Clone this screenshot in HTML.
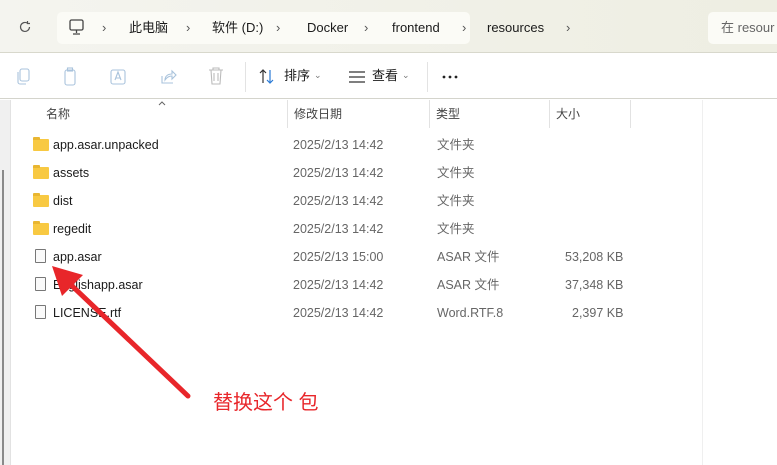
<!DOCTYPE html>
<html><head><meta charset="utf-8"><style>
*{margin:0;padding:0;box-sizing:border-box}
body{width:777px;height:465px;overflow:hidden;background:#fff;font-family:"Liberation Sans","Noto Sans CJK SC",sans-serif;position:relative;color:#1a1a1a;line-height:16px}
.top{position:absolute;left:0;top:0;width:777px;height:53px;background:linear-gradient(90deg,#f4f4ef,#eeeee2);border-bottom:1px solid #d8d8cc}
.bar{position:absolute;left:57px;top:12px;width:413px;height:32px;background:#fbfbf6;border-radius:5px}
.search{position:absolute;left:708px;top:12px;width:80px;height:32px;background:#fbfbf6;border-radius:5px;font-size:13px;color:#666;padding:8px 0 0 13px}
.t{position:absolute;font-size:13px;line-height:16px}
.tb{position:absolute;left:0;top:54px;width:777px;height:45px;background:#fff;border-bottom:1px solid #d4d4cc}
.left{position:absolute;left:0;top:100px;width:11px;height:365px;background:#f0f0f0;border-right:1px solid #e2e2e2}
.sb{position:absolute;left:2px;top:170px;width:2px;height:295px;background:#8a8a8a}
.hdr{position:absolute;top:100px;height:28px;font-size:12px;color:#444;padding:6px 0 0 6px;border-right:1px solid #e2e2e2;line-height:16px}
.row{position:absolute;left:0;width:777px;height:28px;font-size:12.5px}
.row span{position:absolute;top:6px;line-height:16px}
.g{color:#666}
.fold{position:absolute;left:33px;top:8px;width:16px;height:12px;background:#f8c942;border-radius:1px}
.fold:before{content:"";position:absolute;left:0;top:-2px;width:7px;height:3px;background:#e9b631;border-radius:1px 1px 0 0}
.file{position:absolute;left:35px;top:6px;width:11px;height:14px;border:1px solid #777;background:#fafafa;border-radius:1px}
</style></head><body>
<div class="top">
<svg style="position:absolute;left:18px;top:20px" width="14" height="14" viewBox="0 0 14 14"><path d="M11.5 7A4.5 4.5 0 1 1 9.5 3.2M9.5 1v2.5H12" fill="none" stroke="#555" stroke-width="1.2"/></svg>
<div class="bar"></div>
<svg style="position:absolute;left:69px;top:19px" width="16" height="17" viewBox="0 0 16 17"><rect x="1" y="1" width="13" height="10" rx="1.5" fill="none" stroke="#444" stroke-width="1.3"/><path d="M7.5 11v3M4 15h7" stroke="#444" stroke-width="1.3"/></svg>
<span class="t" style="left:102px;top:20px;color:#555">›</span>
<span class="t" style="left:129px;top:20px">此电脑</span>
<span class="t" style="left:186px;top:20px;color:#555">›</span>
<span class="t" style="left:212px;top:20px">软件 (D:)</span>
<span class="t" style="left:276px;top:20px;color:#555">›</span>
<span class="t" style="left:307px;top:20px">Docker</span>
<span class="t" style="left:364px;top:20px;color:#555">›</span>
<span class="t" style="left:392px;top:20px">frontend</span>
<span class="t" style="left:462px;top:20px;color:#555">›</span>
<span class="t" style="left:487px;top:20px">resources</span>
<span class="t" style="left:566px;top:20px;color:#555">›</span>
<div class="search">在 resour</div>
</div>
<div class="tb">
<svg style="position:absolute;left:17px;top:14px" width="16" height="18" viewBox="0 0 16 18" fill="none" stroke="#a9c3dc" stroke-width="1.1"><rect x="3" y="1" width="9" height="12" rx="2"/><path d="M1 4v10a2 2 0 0 0 2 2h6"/></svg>
<svg style="position:absolute;left:63px;top:13px" width="16" height="20" viewBox="0 0 16 20" fill="none" stroke="#a9c3dc" stroke-width="1.1"><rect x="2" y="3" width="10" height="15" rx="2"/><rect x="4.5" y="1" width="5" height="3"/></svg>
<svg style="position:absolute;left:110px;top:14px" width="18" height="18" viewBox="0 0 18 18" fill="none" stroke="#a9c3dc" stroke-width="1.1"><rect x="1" y="2" width="14" height="14" rx="2"/><path d="M5 12l3-8 3 8M6 10h4"/></svg>
<svg style="position:absolute;left:160px;top:14px" width="18" height="18" viewBox="0 0 18 18" fill="none" stroke="#a9c3dc" stroke-width="1.1"><path d="M2 8v7h11"/><path d="M5 12c0-4 3-6 7-6V3l4 4-4 4V8c-3 0-5 1-7 4z"/></svg>
<svg style="position:absolute;left:208px;top:13px" width="16" height="18" viewBox="0 0 16 18" fill="none" stroke="#bbb" stroke-width="1.1"><path d="M1 3h14M5 3V1h6v2M3 3l1 14h8l1-14M6 6v8M10 6v8"/></svg>
<div style="position:absolute;left:245px;top:8px;width:1px;height:30px;background:#e3e3e3"></div>
<svg style="position:absolute;left:259px;top:15px" width="16" height="15" viewBox="0 0 16 15" fill="none" stroke-width="1.2"><path d="M4 14V1M1 4l3-3 3 3" stroke="#333"/><path d="M11 1v13M8 11l3 3 3-3" stroke="#2a7ad5"/></svg>
<span class="t" style="left:284px;top:14px">排序</span><span class="t" style="left:314px;top:13px;font-size:9px;color:#777">⌄</span>
<svg style="position:absolute;left:349px;top:17px" width="16" height="12" viewBox="0 0 16 12" stroke="#333" stroke-width="1.2"><path d="M0 1h16M0 6h16M0 11h16"/></svg>
<span class="t" style="left:372px;top:14px">查看</span><span class="t" style="left:402px;top:13px;font-size:9px;color:#777">⌄</span>
<div style="position:absolute;left:427px;top:8px;width:1px;height:30px;background:#e3e3e3"></div>
<svg style="position:absolute;left:442px;top:21px" width="18" height="4" viewBox="0 0 18 4" fill="#222"><circle cx="2" cy="2" r="1.4"/><circle cx="8" cy="2" r="1.4"/><circle cx="14" cy="2" r="1.4"/></svg>
</div>
<div class="left"></div><div class="sb"></div>
<div class="hdr" style="left:12px;width:276px;padding-left:34px">名称<svg style="position:absolute;left:146px;top:1px" width="8" height="5" viewBox="0 0 8 5"><path d="M1 4l3-3 3 3" fill="none" stroke="#666"/></svg></div>
<div class="hdr" style="left:288px;width:142px">修改日期</div>
<div class="hdr" style="left:430px;width:120px">类型</div>
<div class="hdr" style="left:550px;width:81px">大小</div>
<div style="position:absolute;left:702px;top:100px;width:1px;height:365px;background:#efefef"></div>
<div class="row" style="top:131px"><div class="fold"></div><span style="left:53px">app.asar.unpacked</span><span class="g" style="left:293px">2025/2/13 14:42</span><span class="g" style="left:437px">文件夹</span></div>
<div class="row" style="top:159px"><div class="fold"></div><span style="left:53px">assets</span><span class="g" style="left:293px">2025/2/13 14:42</span><span class="g" style="left:437px">文件夹</span></div>
<div class="row" style="top:187px"><div class="fold"></div><span style="left:53px">dist</span><span class="g" style="left:293px">2025/2/13 14:42</span><span class="g" style="left:437px">文件夹</span></div>
<div class="row" style="top:215px"><div class="fold"></div><span style="left:53px">regedit</span><span class="g" style="left:293px">2025/2/13 14:42</span><span class="g" style="left:437px">文件夹</span></div>
<div class="row" style="top:243px"><div class="file"></div><span style="left:53px">app.asar</span><span class="g" style="left:293px">2025/2/13 15:00</span><span class="g" style="left:437px">ASAR 文件</span><span class="g" style="left:565px">53,208 KB</span></div>
<div class="row" style="top:271px"><div class="file"></div><span style="left:53px">Englishapp.asar</span><span class="g" style="left:293px">2025/2/13 14:42</span><span class="g" style="left:437px">ASAR 文件</span><span class="g" style="left:565px">37,348 KB</span></div>
<div class="row" style="top:299px"><div class="file"></div><span style="left:53px">LICENSE.rtf</span><span class="g" style="left:293px">2025/2/13 14:42</span><span class="g" style="left:437px">Word.RTF.8</span><span class="g" style="left:572px">2,397 KB</span></div>
<svg style="position:absolute;left:0;top:0" width="777" height="465"><path d="M188 396L68 282" stroke="#e8262a" stroke-width="5" stroke-linecap="round"/><path d="M52 266L83 275L62 296Z" fill="#e8262a"/></svg>
<div style="position:absolute;left:213px;top:388px;font-size:20px;line-height:30px;color:#e8262a">替换这个 包</div>
</body></html>
